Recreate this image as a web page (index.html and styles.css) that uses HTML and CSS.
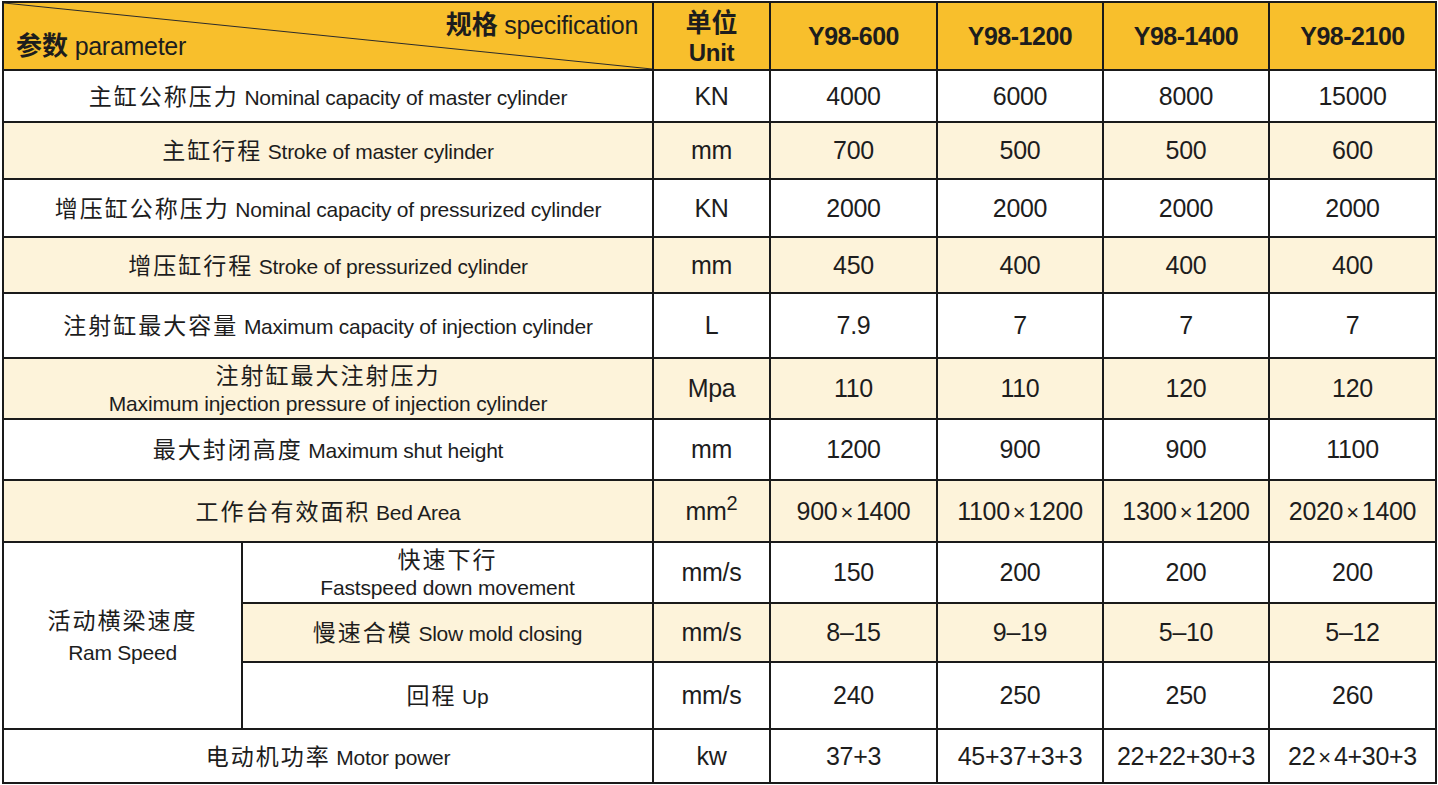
FILE: index.html
```html
<!DOCTYPE html>
<html lang="zh">
<head>
<meta charset="utf-8">
<title>Y98 参数表</title>
<link rel="stylesheet" href="styles.css">
</head>
<body>
<table class="spec">
  <colgroup>
    <col class="c-a"><col class="c-b"><col class="c-unit"><col class="c-m"><col class="c-m2"><col class="c-m2"><col class="c-m">
  </colgroup>
  <tr class="head r0">
    <td colspan="2" class="corner">
      <div class="corner-in">
        <div class="spec-lbl"><b class="zh">规格</b> specification</div>
        <div class="param-lbl"><b class="zh">参数</b> parameter</div>
      </div>
    </td>
    <td class="unit-h"><b class="zh">单位</b><br><b>Unit</b></td>
    <td class="model">Y98-600</td>
    <td class="model">Y98-1200</td>
    <td class="model">Y98-1400</td>
    <td class="model">Y98-2100</td>
  </tr>
  <tr class="r1">
    <td colspan="2" class="name"><span class="zh">主缸公称压力</span> Nominal capacity of master cylinder</td>
    <td>KN</td><td>4000</td><td>6000</td><td>8000</td><td>15000</td>
  </tr>
  <tr class="r2 alt">
    <td colspan="2" class="name"><span class="zh">主缸行程</span> Stroke of master cylinder</td>
    <td>mm</td><td>700</td><td>500</td><td>500</td><td>600</td>
  </tr>
  <tr class="r3">
    <td colspan="2" class="name"><span class="zh">增压缸公称压力</span> Nominal capacity of pressurized cylinder</td>
    <td>KN</td><td>2000</td><td>2000</td><td>2000</td><td>2000</td>
  </tr>
  <tr class="r4 alt">
    <td colspan="2" class="name"><span class="zh">增压缸行程</span> Stroke of pressurized cylinder</td>
    <td>mm</td><td>450</td><td>400</td><td>400</td><td>400</td>
  </tr>
  <tr class="r5">
    <td colspan="2" class="name"><span class="zh">注射缸最大容量</span> Maximum capacity of injection cylinder</td>
    <td>L</td><td>7.9</td><td>7</td><td>7</td><td>7</td>
  </tr>
  <tr class="r6 alt">
    <td colspan="2" class="name two"><span class="zh">注射缸最大注射压力</span><br><span class="en-sm">Maximum injection pressure of injection cylinder</span></td>
    <td>Mpa</td><td>110</td><td>110</td><td>120</td><td>120</td>
  </tr>
  <tr class="r7">
    <td colspan="2" class="name"><span class="zh">最大封闭高度</span> Maximum shut height</td>
    <td>mm</td><td>1200</td><td>900</td><td>900</td><td>1100</td>
  </tr>
  <tr class="r8 alt">
    <td colspan="2" class="name"><span class="zh">工作台有效面积</span> Bed Area</td>
    <td>mm<sup>2</sup></td><td>900<span class="x">×</span>1400</td><td>1100<span class="x">×</span>1200</td><td>1300<span class="x">×</span>1200</td><td>2020<span class="x">×</span>1400</td>
  </tr>
  <tr class="r9">
    <td rowspan="3" class="name ram"><span class="zh">活动横梁速度</span><br><span class="en-ram">Ram Speed</span></td>
    <td class="name two"><span class="zh">快速下行</span><br><span class="en-sm">Fastspeed down movement</span></td>
    <td>mm/s</td><td>150</td><td>200</td><td>200</td><td>200</td>
  </tr>
  <tr class="r10 alt">
    <td class="name"><span class="zh">慢速合模</span> Slow mold closing</td>
    <td>mm/s</td><td>8–15</td><td>9–19</td><td>5–10</td><td>5–12</td>
  </tr>
  <tr class="r11">
    <td class="name"><span class="zh">回程</span> Up</td>
    <td>mm/s</td><td>240</td><td>250</td><td>250</td><td>260</td>
  </tr>
  <tr class="r12">
    <td colspan="2" class="name"><span class="zh">电动机功率</span> Motor power</td>
    <td>kw</td><td>37+3</td><td>45+37+3+3</td><td>22+22+30+3</td><td>22<span class="x">×</span>4+30+3</td>
  </tr>
</table>
</body>
</html>
```

FILE: styles.css
```css
html, body {
  margin: 0;
  padding: 0;
  background: #ffffff;
}

body {
  padding: 1px 0 0 2px;
  font-family: "Liberation Sans", Arial, "Noto Sans CJK SC", sans-serif;
  color: #1d1d1d;
}

.spec {
  border-collapse: collapse;
  table-layout: fixed;
  width: 1434px;
}

.c-a { width: 239px; }
.c-b { width: 411px; }
.c-unit { width: 117px; }
.c-m { width: 167px; }
.c-m2 { width: 166px; }

.spec td {
  border: 2px solid #1a1a1a;
  padding: 0;
  text-align: center;
  vertical-align: middle;
  font-size: 25px;
  letter-spacing: -0.3px;
  white-space: nowrap;
  line-height: 1.15;
}

.zh {
  font-family: "Noto Sans CJK SC", sans-serif;
  letter-spacing: 2px;
  font-size: 23px;
}

.name {
  font-size: 21px !important;
  letter-spacing: -0.25px !important;
}

.alt td {
  background: #fdf3da;
}

.r10 .ram { background: #ffffff; }

.head td {
  background: #f8bf2c;
}

.r0 { height: 68px; }
.r1 { height: 52px; }
.r2 { height: 57px; }
.r3 { height: 58px; }
.r4 { height: 56px; }
.r5 { height: 65px; }
.r6 { height: 61px; }
.r7 { height: 61px; }
.r8 { height: 62px; }
.r9 { height: 61px; }
.r10 { height: 59px; }
.r11 { height: 67px; }
.r12 { height: 54px; }

.corner {
  vertical-align: top !important;
  background: #f8bf2c linear-gradient(to top right,
    transparent calc(50% - 1px),
    #2a2a2a 50%,
    transparent calc(50% + 1px)) !important;
}

.corner-in {
  display: flex;
  flex-direction: column;
  height: 64px;
  font-size: 25px;
  line-height: 28px;
}

.corner .zh {
  font-size: 26px;
  letter-spacing: 0;
}

.spec-lbl {
  text-align: right;
  padding: 6px 14px 0 0;
}

.param-lbl {
  text-align: left;
  padding: 0 0 0 12px;
  margin-top: -9px;
}

.unit-h {
  font-size: 24px !important;
  line-height: 29px !important;
  padding-top: 0 !important;
}

.unit-h .zh {
  font-size: 26px;
  letter-spacing: 0;
}

.model {
  font-weight: bold;
  font-size: 25px !important;
  letter-spacing: -0.5px !important;
}

.two {
  line-height: 1.3 !important;
}

.two .zh {
  font-size: 23px;
}

.en-sm {
  font-size: 21px;
  letter-spacing: -0.15px;
}

.en-ram {
  font-size: 21px;
}

.ram {
  line-height: 1.45 !important;
}

sup {
  font-size: 20px;
  vertical-align: 10px;
  line-height: 0;
}

.x {
  font-size: 22px;
  padding: 0 3px;
}
```
